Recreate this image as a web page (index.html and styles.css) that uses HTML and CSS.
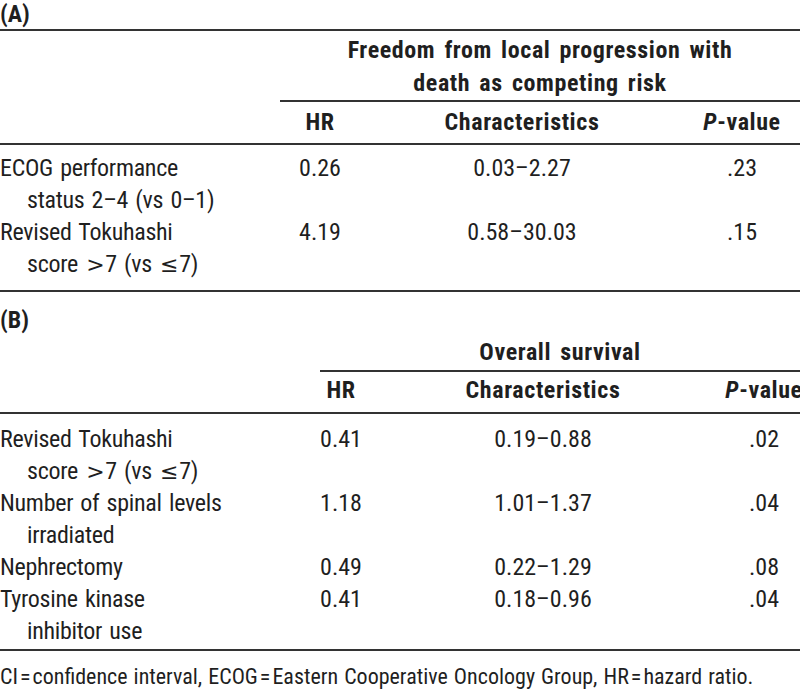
FILE: index.html
```html
<!DOCTYPE html>
<html lang="en">
<head>
<meta charset="utf-8">
<title>Competing risk and overall survival</title>
<link rel="stylesheet" href="styles.css">
</head>
<body>
<section class="panel panel-a">
  <div class="caption">(A)</div>
  <div class="table">
    <div class="head">
      <div class="row group-row">
        <div class="group">Freedom from local progression with<br>death as competing risk</div>
      </div>
      <div class="row col-row">
        <div></div>
        <div>HR</div>
        <div>Characteristics</div>
        <div><i>P</i>-value</div>
      </div>
    </div>
    <div class="tbody">
      <div class="row">
        <div class="stub">ECOG performance<br>status 2–4 (vs 0–1)</div>
        <div class="num">0.26</div>
        <div class="num">0.03–2.27</div>
        <div class="num">.23</div>
      </div>
      <div class="row">
        <div class="stub">Revised Tokuhashi<br>score <span class="op">&gt;</span>7 (vs <span class="op">≤</span>7)</div>
        <div class="num">4.19</div>
        <div class="num">0.58–30.03</div>
        <div class="num">.15</div>
      </div>
    </div>
  </div>
</section>

<section class="panel panel-b">
  <div class="caption">(B)</div>
  <div class="table">
    <div class="head">
      <div class="row group-row">
        <div class="group">Overall survival</div>
      </div>
      <div class="row col-row">
        <div></div>
        <div>HR</div>
        <div>Characteristics</div>
        <div><i>P</i>-value</div>
      </div>
    </div>
    <div class="tbody">
      <div class="row">
        <div class="stub">Revised Tokuhashi<br>score <span class="op">&gt;</span>7 (vs <span class="op">≤</span>7)</div>
        <div class="num">0.41</div>
        <div class="num">0.19–0.88</div>
        <div class="num">.02</div>
      </div>
      <div class="row">
        <div class="stub">Number of spinal levels<br>irradiated</div>
        <div class="num">1.18</div>
        <div class="num">1.01–1.37</div>
        <div class="num">.04</div>
      </div>
      <div class="row">
        <div class="stub">Nephrectomy</div>
        <div class="num">0.49</div>
        <div class="num">0.22–1.29</div>
        <div class="num">.08</div>
      </div>
      <div class="row">
        <div class="stub">Tyrosine kinase<br>inhibitor use</div>
        <div class="num">0.41</div>
        <div class="num">0.18–0.96</div>
        <div class="num">.04</div>
      </div>
    </div>
  </div>
</section>

<p class="footnote">CI<span class="eq">=</span>confidence interval, ECOG<span class="eq">=</span>Eastern Cooperative Oncology Group, HR<span class="eq">=</span>hazard ratio.</p>
</body>
</html>
```

FILE: styles.css
```css
html, body {
  margin: 0;
  padding: 0;
  background: #ffffff;
  overflow: hidden;
}

body {
  width: 800px;
  height: 690px;
  font-family: "Roboto Condensed", Roboto, "Liberation Sans", sans-serif;
  font-stretch: 75%;
  font-size: 24px;
  line-height: 32px;
  color: #1f1f1f;
  word-spacing: 2px;
}

.panel {
  width: 800px;
  overflow: hidden;
}

.caption {
  font-weight: bold;
}

.panel-a .caption {
  height: 29px;
  line-height: 29px;
}

.panel-b {
  margin-top: 12px;
}

.panel-a .table {
  border-top: 2px solid #333333;
}

.table {
  border-bottom: 2px solid #333333;
}

.row {
  display: grid;
}

.panel-a .row {
  grid-template-columns: 280px 80px 324px 116px;
}

.panel-b .row {
  grid-template-columns: 300px 82px 322px 120px;
  width: 824px;
}

.group {
  grid-column: 2 / -1;
  text-align: center;
  font-weight: bold;
  letter-spacing: 0.6px;
  word-spacing: 3px;
  border-bottom: 2px solid #333333;
}

.panel-a .group {
  padding-top: 3px;
  line-height: 33px;
}

.panel-b .group {
  padding-bottom: 2px;
  margin-left: 20px;
  margin-right: 24px;
}

.col-row {
  font-weight: bold;
  letter-spacing: 0.6px;
  text-align: center;
  border-bottom: 2px solid #333333;
}

.panel-a .col-row {
  padding: 4px 0 5px;
}

.panel-b .col-row {
  padding: 2px 0 6px;
}

.panel-a .tbody {
  padding: 7px 0 10px;
}

.panel-b .tbody {
  padding: 9px 0 2px;
}

.stub {
  padding-left: 27px;
  text-indent: -27px;
  white-space: nowrap;
  letter-spacing: -0.3px;
}

.op {
  font-family: "DejaVu Sans", sans-serif;
  font-stretch: normal;
  font-size: 22px;
  line-height: 0;
  padding: 0 1px;
}

.num {
  text-align: center;
}

.footnote {
  margin: 10px 0 0;
  font-size: 22px;
  line-height: 32px;
  word-spacing: 1px;
  white-space: nowrap;
}

.eq {
  padding: 0 2px;
}
```
